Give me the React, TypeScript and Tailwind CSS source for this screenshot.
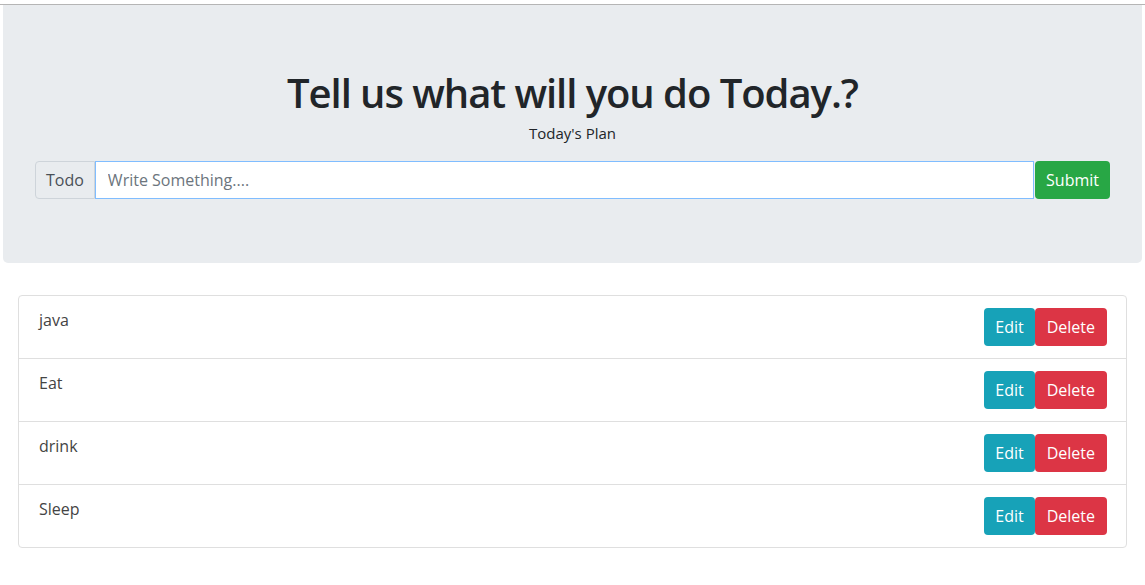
import React from 'react';

const todos = ['java', 'Eat', 'drink', 'Sleep'];

const App: React.FC = () => {
  return (
    <div className="min-h-[585px] bg-white text-[#212529]" style={{ fontFamily: '"Open Sans", "Noto Sans", sans-serif' }}>
      {/* browser edge */}
      <div className="h-[4px] border-b border-[#b5b5b5] box-content" />

      {/* Jumbotron */}
      <div className="mx-[3px] mb-[32px] rounded-b-[5px] bg-[#e9ecef] px-[32px] pt-[64px] pb-[64px] text-center">
        <h1 className="text-[40px] font-semibold leading-[48px] tracking-[-1.05px]">Tell us what will you do Today.?</h1>
        <p className="mt-[4px] text-[15px] leading-[24px]">Today's Plan</p>
        <div className="mt-[16px] flex h-[38px]">
          <span className="flex items-center rounded-l-[4px] border border-[#ced4da] bg-[#e9ecef] px-[10px] text-[16px] text-[#495057]">
            Todo
          </span>
          <input
            className="min-w-0 flex-1 border border-[#80bdff] bg-white px-[12px] text-[16px] text-[#495057] outline-none placeholder:text-[#6c757d]"
            placeholder="Write Something...."
          />
          <button className="ml-[1px] rounded-[4px] bg-[#28a745] px-[11px] text-[16px] text-white">Submit</button>
        </div>
      </div>

      {/* List */}
      <ul className="mx-[18px] rounded-[4px] border border-[#dfdfdf]">
        {todos.map((t, i) => (
          <li
            key={t}
            className={`flex items-start justify-between py-[12px] pl-[20px] pr-[19px] ${i > 0 ? 'border-t border-[#dfdfdf]' : ''}`}
          >
            <span className="text-[16px] leading-[24px] text-[#444]">{t}</span>
            <div className="flex">
              <button className="h-[38px] rounded-[4px] bg-[#17a2b8] px-[11px] text-[16px] text-white">Edit</button>
              <button className="h-[38px] rounded-[4px] bg-[#dc3545] px-[12px] text-[16px] text-white">Delete</button>
            </div>
          </li>
        ))}
      </ul>
    </div>
  );
};

export default App;
